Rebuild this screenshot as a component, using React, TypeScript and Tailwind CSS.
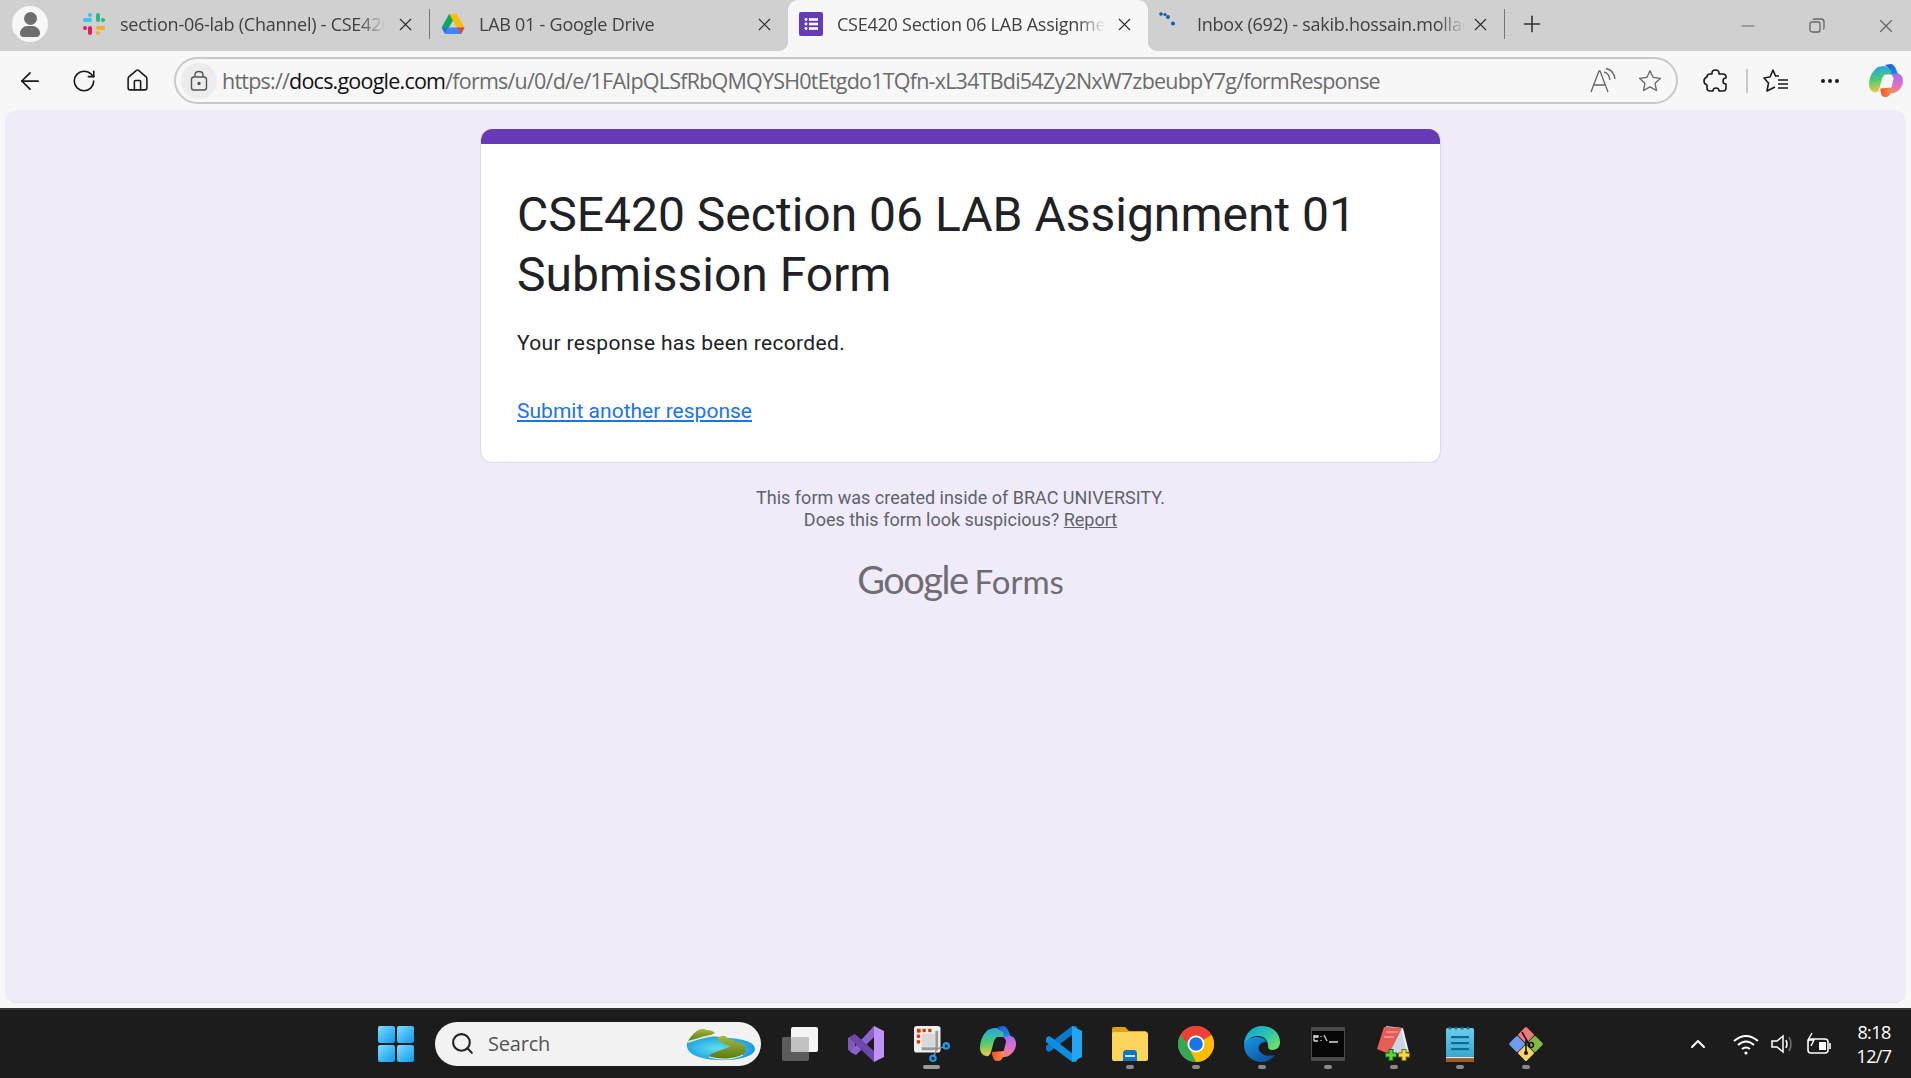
import React from "react";
import { ArrowLeft, RotateCw, Home, Plus, X, Minus, Search, ChevronUp, Ellipsis } from "lucide-react";

const Slack = () => (
  <svg width="24" height="24" viewBox="0 0 24 24">
    <rect x="1" y="6" width="9" height="4" rx="2" fill="#36c5f0" />
    <circle cx="8" cy="3" r="2" fill="#36c5f0" />
    <rect x="14" y="1" width="4" height="9" rx="2" fill="#2eb67d" />
    <circle cx="21" cy="8" r="2" fill="#2eb67d" />
    <rect x="14" y="14" width="9" height="4" rx="2" fill="#ecb22e" />
    <circle cx="16" cy="21" r="2" fill="#ecb22e" />
    <rect x="6" y="14" width="4" height="9" rx="2" fill="#e01e5a" />
    <circle cx="3" cy="16" r="2" fill="#e01e5a" />
  </svg>
);
const Drive = () => (
  <svg width="24" height="24" viewBox="0 0 24 24">
    <path d="M8.2 2 L15.8 2 L7.6 16 L3.8 16 L0.5 15.5 Z" fill="#0ea960" />
    <path d="M8.2 2 L15.8 2 L23.5 15.5 L16 15.5 Z" fill="#fbbc04" />
    <path d="M4 22 L20 22 L23.5 15.5 L7.6 15.5 Z" fill="#4285f4" />
    <path d="M0.5 15.5 L4 22 L7.6 15.5 Z" fill="#1a73e8" />
    <path d="M20 22 L23.5 15.5 L16 15.5 Z" fill="#ea4335" />
  </svg>
);
const FormsIcon = () => (
  <svg width="24" height="24" viewBox="0 0 24 24">
    <rect width="24" height="24" rx="2" fill="#673ab7" />
    <g fill="#fff">
      <circle cx="7" cy="7.5" r="1.4" /><rect x="10" y="6.2" width="9" height="2.6" />
      <circle cx="7" cy="12" r="1.4" /><rect x="10" y="10.7" width="9" height="2.6" />
      <circle cx="7" cy="16.5" r="1.4" /><rect x="10" y="15.2" width="9" height="2.6" />
    </g>
  </svg>
);
const InboxDots = () => (
  <svg width="20" height="24" viewBox="0 0 20 24" fill="#0b5cad">
    <circle cx="2" cy="2" r="1.8" /><circle cx="6" cy="2.5" r="1.6" /><circle cx="9" cy="5" r="1.9" /><circle cx="14" cy="11.5" r="2" />
  </svg>
);
const Tab = ({ icon, title, w, active, sep, textW }: { icon: React.ReactNode; title: string; w: string; active?: boolean; sep?: boolean; textW: string }) => (
  <div className={`${w} relative h-full shrink-0 flex items-center ${active ? "bg-[#f7f7f7] rounded-t-[10px]" : ""}`}>
    {active && <div className="absolute -left-[10px] bottom-0 w-[10px] h-[10px] bg-[radial-gradient(circle_at_0_0,#d0d0d0_10px,#f7f7f7_10.5px)]" />}
    {active && <div className="absolute -right-[10px] bottom-0 w-[10px] h-[10px] bg-[radial-gradient(circle_at_100%_0,#d0d0d0_10px,#f7f7f7_10.5px)]" />}
    <div className="w-[11px] shrink-0" />
    <div className="w-[24px] h-[24px] shrink-0 -mt-1">{icon}</div>
    <div className={`${textW} ml-[14px] h-[30px] leading-[30px] -mt-1 shrink-0 overflow-hidden whitespace-nowrap text-[18px] tracking-[-0.25px] text-[#404040] [mask-image:linear-gradient(to_right,black_90%,transparent)]`}>{title}</div>
    <div className="flex-1" />
    <X size={21} strokeWidth={1.3} className="text-[#2a2a2a] -mt-[2px] shrink-0" />
    <div className="w-[13px] shrink-0" />
    {sep && <div className="w-px h-[30px] bg-[#777] shrink-0 -mt-1" />}
  </div>
);

const Windows = () => (
  <svg width="36" height="36" viewBox="0 0 36 36">
    <defs><linearGradient id="w" x1="0" y1="0" x2="1" y2="1"><stop offset="0" stopColor="#7fdcff" /><stop offset="1" stopColor="#0a9aef" /></linearGradient></defs>
    <rect x="0" y="0" width="17" height="17" rx="2" fill="url(#w)" />
    <rect x="19" y="0" width="17" height="17" rx="2" fill="url(#w)" />
    <rect x="0" y="19" width="17" height="17" rx="2" fill="url(#w)" />
    <rect x="19" y="19" width="17" height="17" rx="2" fill="url(#w)" />
  </svg>
);
const Island = () => (
  <svg width="72" height="36" viewBox="0 0 72 36">
    <defs>
      <radialGradient id="wt" cx="0.45" cy="0.5" r="0.6"><stop offset="0" stopColor="#5ee2f0" /><stop offset="1" stopColor="#1496e0" /></radialGradient>
      <linearGradient id="gr" x1="0" y1="0" x2="0" y2="1"><stop offset="0" stopColor="#a9b83a" /><stop offset="1" stopColor="#5c7a18" /></linearGradient>
    </defs>
    <path d="M2 17 C8 10 26 9 44 12 C58 13 70 16 70 23 C70 31 50 35 32 34 C14 33 0 28 2 17Z" fill="url(#wt)" />
    <path d="M3 15 C6 10 12 2 19 3 C22 5 26 3 30 7 L26 9 C18 10 10 13 3 15Z" fill="url(#gr)" />
    <path d="M3 16 C10 14 18 11 27 10" stroke="#efe6b0" strokeWidth="1.6" fill="none" />
    <path d="M32 13 C36 9 40 9 42 12 C46 14 50 14 54 17 C60 16 63 24 58 29 C48 34 34 34 24 30 C28 25 40 24 46 20 C42 19 36 17 32 13Z" fill="url(#gr)" />
    <path d="M24 31 C34 34 48 34 58 29" stroke="#e4e8c8" strokeWidth="1.2" fill="none" />
  </svg>
);
const TaskView = () => (
  <svg width="36" height="36" viewBox="0 0 36 36">
    <rect x="0" y="11" width="27" height="24" rx="2" fill="#5c5c5c" />
    <rect x="9" y="1" width="27" height="25" rx="2" fill="#f4f4f4" />
    <rect x="9" y="11" width="18" height="15" rx="1.5" fill="#c2c2c2" />
  </svg>
);
const VS = () => (
  <svg width="36" height="36" viewBox="0 0 36 36">
    <path d="M0 12 L7 8 L7 28 L0 24Z" fill="#7f5ab8" />
    <path d="M26 0 L26 11 L8 29 L2 26Z" fill="#8d63d0" />
    <path d="M7 8 L26 25 L26 36 L1 12Z" fill="#6c48a8" />
    <path d="M26 0 L36 5 L36 31 L26 36Z" fill="#bf93f5" />
  </svg>
);
const Snip = () => (
  <svg width="38" height="38" viewBox="0 0 38 38">
    <rect x="0" y="0" width="28" height="28" rx="3" fill="#efefef" />
    <path d="M8 8 H22 V22 H8Z" fill="#d8d8d8" />
    <g fill="#d83b01">
      <rect x="3" y="3" width="4" height="4" /><rect x="9" y="3" width="3.5" height="3.5" /><rect x="15" y="3" width="3.5" height="3.5" />
      <rect x="3" y="9" width="3.5" height="3.5" /><rect x="3" y="15" width="3.5" height="3.5" />
    </g>
    <path d="M24 5 V24 H8" stroke="#9a9a9a" strokeWidth="3" fill="none" />
    <circle cx="34" cy="21" r="2.8" fill="none" stroke="#1c9ae8" strokeWidth="2.4" />
    <circle cx="20" cy="34" r="2.8" fill="none" stroke="#1c9ae8" strokeWidth="2.4" />
    <path d="M32 22 L24 24 L21 32" stroke="#8a8a8a" strokeWidth="1.5" fill="none" />
  </svg>
);
const Copilot = ({ s = 36 }: { s?: number }) => (
  <svg width={s} height={s} viewBox="0 0 36 36">
    <defs>
      <linearGradient id={`c1${s}`} x1="0.3" y1="0" x2="0.4" y2="1"><stop offset="0" stopColor="#22a4f0" /><stop offset="0.5" stopColor="#4ccb70" /><stop offset="1" stopColor="#f7c93c" /></linearGradient>
      <linearGradient id={`c2${s}`} x1="0.5" y1="0" x2="0.5" y2="1"><stop offset="0" stopColor="#a46cf0" /><stop offset="0.6" stopColor="#e070c8" /><stop offset="1" stopColor="#f58a5a" /></linearGradient>
      <linearGradient id={`c3${s}`} x1="0" y1="0" x2="1" y2="1"><stop offset="0" stopColor="#1f55d8" /><stop offset="1" stopColor="#1c8ff0" /></linearGradient>
      <linearGradient id={`c4${s}`} x1="0" y1="0" x2="1" y2="0"><stop offset="0" stopColor="#f2502a" /><stop offset="1" stopColor="#f98f4c" /></linearGradient>
    </defs>
    <path d="M17 1 L23 0 C25 0 27 2 28 4 L31 11 L23 11 C22 7 20 3 17 1Z" fill={`url(#c3${s})`} />
    <path d="M6 6 C8 3 12 2 17 2 L23 6 C24 8 24 10 23 11 L18 11 C16 11 15 13 14 15 L11 26 C10 29 8 31 6 30 C2 29 0 26 0 22 C0 16 2 10 6 6Z" fill={`url(#c1${s})`} />
    <path d="M12 26 L24 25 C24 30 22 35 18 35 L16 35 C14 35 12 31 12 26Z" fill={`url(#c4${s})`} />
    <path d="M23 11 L30 10 C34 10 36 14 36 18 C36 24 31 30 25 31 L21 31 C22 29 23 27 24 24 L26 16 C26 14 25 12 23 11Z" fill={`url(#c2${s})`} />
  </svg>
);
const VSCode = () => (
  <svg width="36" height="36" viewBox="0 0 36 36">
    <path d="M28 3 L3 22" stroke="#0a7bcc" strokeWidth="7" strokeLinecap="round" />
    <path d="M3 14 L28 33" stroke="#0f8ee0" strokeWidth="7" strokeLinecap="round" />
    <path d="M26 0 L36 5 L36 31 L26 36Z" fill="#20a6f4" />
  </svg>
);
const Explorer = () => (
  <svg width="36" height="36" viewBox="0 0 36 36">
    <path d="M0 3 Q0 1 2 1 L13 1 L17 5 L34 5 L34 12 L0 12Z" fill="#e0a20c" />
    <rect x="0" y="6" width="36" height="29" rx="2" fill="#fcd65a" />
    <path d="M11 28 Q11 24 14 24 L22 24 Q25 24 25 28 L25 35 L11 35Z" fill="#0f74c8" />
    <rect x="13" y="29" width="10" height="2" fill="#cfe8fb" />
  </svg>
);
const Chrome = () => (
  <svg width="36" height="36" viewBox="0 0 36 36">
    <circle cx="18" cy="18" r="18" fill="#ea4335" />
    <path d="M18 18 L2.4 9 A18 18 0 0 0 18 36 L27 18Z" fill="#34a853" />
    <path d="M18 18 L33.6 9 A18 18 0 0 1 18 36 L9 18 Z" fill="#fbbc04" />
    <path d="M18 10 L33.6 9 A18 18 0 0 0 2.4 9 L10 18Z" fill="#ea4335" />
    <circle cx="18" cy="18" r="8.5" fill="#fff" />
    <circle cx="18" cy="18" r="6.8" fill="#1a73e8" />
  </svg>
);
const Edge = () => (
  <svg width="36" height="36" viewBox="0 0 36 36">
    <defs>
      <linearGradient id="e1" x1="0" y1="0" x2="1" y2="0.7"><stop offset="0" stopColor="#0e9bd8" /><stop offset="0.6" stopColor="#2cc5b0" /><stop offset="1" stopColor="#6fdc6a" /></linearGradient>
      <linearGradient id="e2" x1="0" y1="0" x2="0.8" y2="1"><stop offset="0" stopColor="#1a98e6" /><stop offset="1" stopColor="#0c4f9a" /></linearGradient>
    </defs>
    <path d="M18 0 C29 0 36 8 36 16 C36 22 32 24 28 24 C25 24 24 22 24 20 C24 14 20 10 14 10 C8 10 2 14 0 19 C0 8 8 0 18 0Z" fill="url(#e1)" />
    <path d="M0 19 C2 13 8 11 14 11 C19 11 22 14 22 16 C16 16 14 20 15 24 C17 29 24 31 31 29 C28 33 23 36 18 36 C8 36 0 29 0 19Z" fill="url(#e2)" />
  </svg>
);
const Cmd = () => (
  <svg width="34" height="34" viewBox="0 0 34 34">
    <rect width="34" height="34" rx="1" fill="#4a4a4a" />
    <rect x="1" y="4" width="32" height="26" fill="#050505" />
    <path d="M4 9 h3 v1 h-3z M3 8 v6 M3 14 h4 M10 9 v1 M10 13 v1 M13 8 L16 14 M18 15 h9" stroke="#d8d8d8" strokeWidth="1.3" fill="none" />
  </svg>
);
const NotepadPP = () => (
  <svg width="36" height="36" viewBox="0 0 36 36">
    <path d="M10 0 L27 2 L33 26 L16 28Z" fill="#c7d7e5" />
    <path d="M26 3 L31 24" stroke="#f1f5f8" strokeWidth="1.5" />
    <path d="M8 1 L26 2 L18 18 L13 28 L1 23Z" fill="#e85c58" />
    <path d="M10 6 L22 6 M8 11 L18 11" stroke="#f2a09a" strokeWidth="1.5" />
    <path d="M15 23 v12 M9 29 h12" stroke="#0c6b12" strokeWidth="5" />
    <path d="M15 24 v10 M10 29 h10" stroke="#5ed33b" strokeWidth="3" />
    <path d="M28 23 v12 M22 29 h12" stroke="#8a6d10" strokeWidth="5" />
    <path d="M28 24 v10 M23 29 h10" stroke="#f6de3e" strokeWidth="3" />
  </svg>
);
const Notepad = () => (
  <svg width="28" height="36" viewBox="0 0 28 36">
    <defs><linearGradient id="np" x1="0" y1="0" x2="0" y2="1"><stop offset="0" stopColor="#6ccdec" /><stop offset="1" stopColor="#38a8d0" /></linearGradient></defs>
    <rect y="2" width="28" height="29" rx="1.5" fill="url(#np)" />
    <rect y="31" width="28" height="1.5" fill="#f0e6d8" />
    <rect y="32.5" width="28" height="3.5" fill="#a05a22" />
    <g fill="#0e6c94"><circle cx="4" cy="2" r="1.6" /><circle cx="10" cy="2" r="1.6" /><circle cx="16" cy="2" r="1.6" /><circle cx="22" cy="2" r="1.6" /><rect x="5" y="10" width="18" height="2.2" /><rect x="5" y="16" width="18" height="2.2" /><rect x="5" y="22" width="18" height="2.2" /></g>
  </svg>
);
const GitExt = () => (
  <svg width="36" height="36" viewBox="0 0 36 36">
    <rect x="12" y="3" width="12" height="12" rx="1.5" fill="#f0787a" transform="rotate(45 18 9)" />
    <rect x="21" y="12" width="12" height="12" rx="1.5" fill="#83b84a" transform="rotate(45 27 18)" />
    <rect x="3" y="12" width="12" height="12" rx="1.5" fill="#6f9cf0" transform="rotate(45 9 18)" />
    <rect x="12" y="21" width="12" height="12" rx="1.5" fill="#f4d36b" transform="rotate(45 18 27)" />
    <path d="M14 6 L22 20 M18 14 L18 27" stroke="#161616" strokeWidth="1.6" />
    <circle cx="23" cy="19" r="2.4" fill="none" stroke="#161616" strokeWidth="1.5" /><circle cx="18" cy="27" r="2" fill="#161616" />
  </svg>
);
const TaskIcon = ({ children, dot }: { children: React.ReactNode; dot?: "wide" | "small" }) => (
  <div className="relative w-[36px] h-[36px] shrink-0 flex items-center justify-center">
    {children}
    {dot === "wide" && <div className="absolute left-[9px] top-[39px] w-[17px] h-[4px] rounded-full bg-[#9a9a9a]" />}
    {dot === "small" && <div className="absolute left-[14px] top-[39px] w-[8px] h-[4px] rounded-full bg-[#8a8a8a]" />}
  </div>
);

export default function App() {
  return (
    <div className="w-[1911px] h-[1078px] overflow-hidden flex flex-col bg-[#f7f7f7] font-['Open_Sans',sans-serif]">
      {/* tab strip */}
      <div className="h-[51px] shrink-0 bg-[#d0d0d0] flex items-center">
        <div className="w-[71px] h-full shrink-0 flex items-center">
          <div className="ml-[12px] w-[36px] h-[36px] -mt-[3px] rounded-full bg-[#f7f7f7] flex flex-col items-center justify-center">
            <div className="w-[13px] h-[13px] rounded-full bg-[#6e6e6e]" />
            <div className="w-[20px] h-[11px] mt-[1px] rounded-t-[10px] rounded-b-[5px] bg-[#6e6e6e]" />
          </div>
        </div>
        <Tab icon={<Slack />} title="section-06-lab (Channel) - CSE420" w="w-[359px]" textW="w-[265px]" sep />
        <Tab icon={<Drive />} title="LAB 01 - Google Drive" w="w-[358px]" textW="w-[270px]" />
        <Tab icon={<FormsIcon />} title="CSE420 Section 06 LAB Assignment 01" w="w-[360px]" textW="w-[268px]" active />
        <Tab icon={<InboxDots />} title="Inbox (692) - sakib.hossain.molla@g.bracu.ac.bd" w="w-[357px]" textW="w-[268px]" sep />
        <Plus size={26} strokeWidth={1.5} className="ml-[14px] -mt-1 text-[#333] shrink-0" />
        <div className="flex-1" />
        <Minus size={20} strokeWidth={1.4} className="text-[#666] shrink-0" />
        <svg width="18" height="18" viewBox="0 0 18 18" fill="none" stroke="#666" strokeWidth="1.3" className="ml-[50px] shrink-0"><rect x="2" y="5" width="10" height="10" rx="2" /><path d="M5 3 Q5 2 7 2 L13 2 Q16 2 16 5 L16 11 Q16 12 15 12" /></svg>
        <X size={22} strokeWidth={1.3} className="ml-[49px] mr-[14px] text-[#666] shrink-0" />
      </div>
      {/* address bar */}
      <div className="h-[59px] shrink-0 bg-[#f7f7f7] flex items-center">
        <ArrowLeft size={28} strokeWidth={1.5} className="ml-[16px] text-[#1a1a1a] shrink-0" />
        <RotateCw size={26} strokeWidth={1.5} className="ml-[27px] text-[#1a1a1a] shrink-0" />
        <Home size={25} strokeWidth={1.5} className="ml-[28px] text-[#1a1a1a] shrink-0" />
        <div className="ml-[24px] w-[1504px] h-[47px] shrink-0 rounded-full border-2 border-[#c8c8c8] flex items-center">
          <div className="ml-[5px] w-[36px] h-[36px] rounded-full bg-[#ececec] flex items-center justify-center shrink-0">
            <svg width="20" height="22" viewBox="0 0 20 22" fill="none" stroke="#555" strokeWidth="1.4"><rect x="2.5" y="7" width="15" height="13" rx="2.5" /><path d="M6 7 V5 Q6 1.5 10 1.5 Q14 1.5 14 5 V7" /><circle cx="10" cy="13.5" r="1" fill="#555" /></svg>
          </div>
          <div className="ml-[5px] mt-[2px] whitespace-nowrap text-[21.5px] tracking-[-0.78px] text-[#6b6b6b]">
            https://<span className="text-[#111]">docs.google.com</span>/forms/u/0/d/e/1FAIpQLSfRbQMQYSH0tEtgdo1TQfn-xL34TBdi54Zy2NxW7zbeubpY7g/formResponse
          </div>
          <div className="flex-1" />
          <svg width="28" height="28" viewBox="0 0 28 28" fill="none" stroke="#666" strokeWidth="1.3" className="shrink-0"><path d="M2 25 L10 4 L11 4 L19 25 M5 18 H16" /><path d="M15 5 Q20 6 21 13 M17 1.5 Q25 3 26 12" /></svg>
          <svg width="26" height="26" viewBox="0 0 24 24" fill="none" stroke="#666" strokeWidth="1.2" strokeLinejoin="round" className="ml-[20px] mr-[13px] shrink-0"><path d="M12 2.5l2.9 6.2 6.8.8-5 4.6 1.3 6.7-6-3.4-6 3.4 1.3-6.7-5-4.6 6.8-.8z" /></svg>
        </div>
        <svg width="26" height="26" viewBox="0 0 26 26" fill="none" stroke="#1a1a1a" strokeWidth="1.6" strokeLinejoin="round" className="ml-[25px] shrink-0"><path d="M9 5 Q9 2 12.5 2 Q16 2 16 5 L16 6 L20 6 Q23 6 23 9 L23 10 Q20 10 20 13 Q20 16 23 16 L23 20 Q23 23 20 23 L16 23 Q16 20 13 20 Q10 20 10 23 L7 23 Q4 23 4 20 L4 17 Q1 16 1 13 Q1 10 4 9 Q4 6 7 6 L9 6Z" /></svg>
        <div className="ml-[17px] w-[2px] h-[24px] bg-[#c8c8c8] shrink-0" />
        <svg width="26" height="26" viewBox="0 0 26 26" fill="none" stroke="#1a1a1a" strokeWidth="1.6" strokeLinejoin="round" className="ml-[15px] shrink-0"><path d="M16 8 L12.5 8 L10 2 L7 9 L1 10 L5.5 15 L4 23 L12 19" /><path d="M15 12 H25 M15 16 H25 M15 20 H25" /></svg>
        <Ellipsis size={24} strokeWidth={2} className="ml-[29px] text-[#1a1a1a] shrink-0" />
        <div className="ml-[27px] shrink-0"><Copilot s={34} /></div>
      </div>
      {/* page */}
      <div className="flex-1 min-h-0 mx-[5px] mb-[5px] rounded-[12px] bg-[#efebf9] border-b border-[#e2e2e2] flex flex-col items-center pt-[19px] pl-[10px]">
        <div className="w-[961px] h-[334px] shrink-0 rounded-[12px] overflow-hidden bg-white border-x border-b border-[#dadce0] flex flex-col font-['Roboto',sans-serif]">
          <div className="h-[15px] -mx-px shrink-0 bg-[#673ab7]" />
          <div className="pt-[41px] pl-[36px] pr-[36px]">
            <div className="text-[48px] leading-[60px] text-[#202124]">CSE420 Section 06 LAB Assignment 01 Submission Form</div>
            <div className="mt-[24px] text-[21px] leading-[28px] tracking-[0.33px] text-[#202124]">Your response has been recorded.</div>
            <div className="mt-[40px] text-[21px] leading-[28px] tracking-[0.02px] text-[#1a73e8] underline">Submit another response</div>
          </div>
        </div>
        <div className="mt-[24px] text-center text-[18px] leading-[22px] text-[#5f6368] font-['Roboto',sans-serif]">
          <div>This form was created inside of BRAC UNIVERSITY.</div>
          <div>Does this form look suspicious? <span className="underline">Report</span></div>
        </div>
        <div className="mt-[26px] flex items-baseline text-[#6f6d72] font-['Lato',sans-serif] leading-[44px]">
          <span className="text-[38px] tracking-[-1.5px]">Google</span>
          <span className="ml-[7px] text-[33px] tracking-[0px]">Forms</span>
        </div>
      </div>
      {/* taskbar */}
      <div className="h-[70px] shrink-0 bg-[#1c1c1c] border-t-2 border-[#333] flex items-center pl-[378px] pb-[1px]">
        <div className="shrink-0"><Windows /></div>
        <div className="ml-[21px] w-[326px] h-[44px] shrink-0 rounded-full bg-[#f2f2f2] flex items-center">
          <Search size={25} strokeWidth={2} className="ml-[15px] text-[#222] shrink-0" />
          <div className="ml-[13px] text-[20px] tracking-[-0.2px] text-[#555]">Search</div>
          <div className="flex-1" />
          <div className="mr-[4px] shrink-0"><Island /></div>
        </div>
        <div className="ml-[21px] flex items-center gap-[30px]">
          <TaskIcon><TaskView /></TaskIcon>
          <TaskIcon><VS /></TaskIcon>
          <TaskIcon dot="wide"><Snip /></TaskIcon>
          <TaskIcon><Copilot /></TaskIcon>
          <TaskIcon><VSCode /></TaskIcon>
          <TaskIcon dot="small"><Explorer /></TaskIcon>
          <TaskIcon dot="small"><Chrome /></TaskIcon>
          <TaskIcon dot="small"><Edge /></TaskIcon>
          <TaskIcon dot="small"><Cmd /></TaskIcon>
          <TaskIcon dot="small"><NotepadPP /></TaskIcon>
          <TaskIcon dot="small"><Notepad /></TaskIcon>
          <TaskIcon dot="small"><GitExt /></TaskIcon>
        </div>
        <ChevronUp size={24} strokeWidth={2} className="ml-[142px] text-white shrink-0" />
        <svg width="26" height="22" viewBox="0 0 26 22" fill="none" stroke="#fff" strokeWidth="2" className="ml-[23px] shrink-0"><path d="M1 8 Q13 -2 25 8 M5 12 Q13 5 21 12 M9 16 Q13 13 17 16" /><circle cx="13" cy="20" r="1.6" fill="#fff" stroke="none" /></svg>
        <svg width="24" height="24" viewBox="0 0 24 24" fill="none" stroke="#fff" strokeWidth="1.5" className="ml-[11px] shrink-0"><path d="M2 9 H7 L13 4 V20 L7 15 H2Z" /><path d="M16 8 Q18 12 16 16" /><path d="M19 5 Q23 12 19 19" stroke="#777" /></svg>
        <svg width="26" height="24" viewBox="0 0 26 24" fill="none" stroke="#fff" strokeWidth="1.6" className="ml-[12px] shrink-0"><rect x="2" y="7" width="20" height="14" rx="3" /><rect x="13" y="10" width="7" height="8" fill="#fff" stroke="none" /><path d="M24 11 V17" /><path d="M6 1 L2 8 H8 L5 14" strokeWidth="1.4" /></svg>
        <div className="ml-[18px] w-[48px] shrink-0 text-white text-[18px] leading-[24px] text-center tracking-[-0.6px]">
          <div>8:18</div>
          <div>12/7</div>
        </div>
      </div>
    </div>
  );
}
